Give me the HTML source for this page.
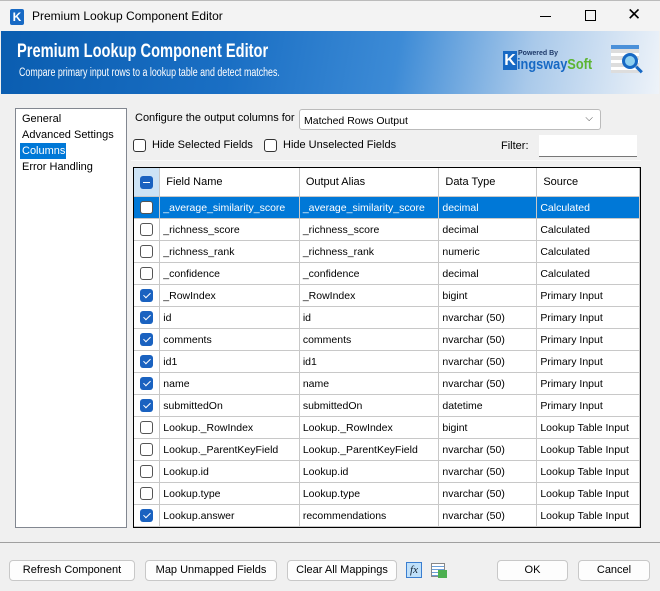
<!DOCTYPE html>
<html><head><meta charset="utf-8">
<style>
*{box-sizing:border-box;margin:0;padding:0}
body{width:660px;height:591px;overflow:hidden;background:#f0f0f0;font-family:"Liberation Sans",sans-serif;font-size:11px;color:#000;position:relative}
.a{position:absolute}
.title{left:0;top:0;width:660px;height:31px;background:#f3f3f3;border-top:1px solid #bbb}
.banner{left:1px;top:31px;width:658px;height:63px;background:linear-gradient(100deg,#0a5db0 0%,#1a6fc4 35%,#3d8bd6 60%,#a9c9ea 80%,#eef3f9 100%)}
.list{left:15px;top:108px;width:112px;height:420px;background:#fff;border:1px solid #828790}
.list div{padding-left:6px;height:16px;line-height:16px;font-size:11px;white-space:nowrap}
.grid{left:133px;top:167px;width:508px;height:361px;border:1px solid #000;background:#fff;overflow:hidden}
table{border-collapse:collapse;table-layout:fixed}
td{height:22px;border-right:1px solid #c8c8c8;border-bottom:1px solid #c8c8c8;padding:1px 0 0 3px;font-size:10.5px;white-space:nowrap;overflow:hidden;vertical-align:middle}
tr.h td{height:28px;padding-left:6px;font-size:11px}
tr.s td{background:#0078d7;color:#fff}
.cb{width:13px;height:13px;border:1px solid #555;border-radius:3px;background:#fff;margin-left:6px}
.ck{width:13px;height:13px;border-radius:3px;background:#1a62c0;margin-left:6px;position:relative}
.ck:after{content:"";position:absolute;left:4.5px;top:2px;width:3px;height:6px;border:solid #fff;border-width:0 1.3px 1.3px 0;transform:rotate(45deg)}
.mn{width:13px;height:13px;border-radius:3px;background:#1a62c0;margin-left:6px;position:relative}
.btn{height:21px;border:1px solid #c8c8c8;border-radius:4px;background:#fdfdfd;text-align:center;line-height:19px;font-size:11px}
.chk{width:13px;height:13px;border:1px solid #333;border-radius:3px;background:#fff}
.sx{transform:scaleX(0.77);transform-origin:left top;white-space:nowrap}
</style></head><body>
<div class="a title">
  <div class="a" style="left:10px;top:8px;width:14px;height:16px;background:#1769c4;border-radius:2px;color:#fff;font-weight:bold;font-size:12px;text-align:center;line-height:16px">K</div>
  <div class="a" style="left:32px;top:8px;font-size:12px">Premium Lookup Component Editor</div>
  <div class="a" style="left:540px;top:15px;width:11px;height:1px;background:#000"></div>
  <div class="a" style="left:585px;top:9px;width:11px;height:11px;border:1px solid #000"></div>
  <div class="a" style="left:627px;top:5px;font-size:17px;line-height:17px">✕</div>
</div>
<div class="a banner">
  <div class="a sx" style="left:16px;top:10px;color:#fff;font-weight:bold;font-size:19px">Premium Lookup Component Editor</div>
  <div class="a sx" style="left:18px;top:36px;color:#fff;font-size:11.5px">Compare primary input rows to a lookup table and detect matches.</div>
  <div class="a" style="left:502px;top:20px;width:14px;height:19px;background:#1769c4;color:#fff;font-weight:bold;font-size:16px;line-height:19px;text-align:center">K</div>
  <div class="a" style="left:517px;top:19px;font-size:7px;font-weight:bold;color:#1e3a6a">Powered By</div>
  <div class="a sx" style="left:516px;top:25px;font-size:15px;font-weight:bold;color:#1769c4;transform:scaleX(0.85)">ingsway<span style="color:#5cb531">Soft</span></div>
  <div class="a" style="left:610px;top:14px;width:28px;height:28px;background:repeating-linear-gradient(#ddd 0 4px,#fff 4px 7px);border-top:4px solid #4a90d9"></div>
  <div class="a" style="left:621px;top:22px;width:16px;height:16px;border:3px solid #1769c4;border-radius:50%;background:#8fd0f0"></div>
  <div class="a" style="left:634px;top:37px;width:8px;height:3px;background:#1769c4;transform:rotate(45deg)"></div>
</div>
<div class="a list">
  <div style="margin-top:2px">General</div>
  <div>Advanced Settings</div>
  <div style="margin-left:4px;padding-left:2px;width:46px;background:#0078d7;color:#fff">Columns</div>
  <div>Error Handling</div>
</div>
<div class="a" style="left:135px;top:112px">Configure the output columns for</div>
<div class="a" style="left:299px;top:109px;width:302px;height:21px;background:#fff;border:1px solid #bbb;border-radius:3px;padding:5px 0 0 4px;font-size:10.5px">Matched Rows Output<span class="a" style="right:7px;top:3px;font-size:10px;color:#444">⌵</span></div>
<div class="a chk" style="left:133px;top:139px"></div>
<div class="a" style="left:152px;top:139px">Hide Selected Fields</div>
<div class="a chk" style="left:264px;top:139px"></div>
<div class="a" style="left:283px;top:139px">Hide Unselected Fields</div>
<div class="a" style="left:501px;top:140px">Filter:</div>
<div class="a" style="left:539px;top:135px;width:98px;height:22px;background:#fff;border-bottom:1px solid #777"></div>
<div class="a" style="left:131px;top:160px;width:510px;height:1px;background:#fafafa"></div>
<div class="a grid">
<table>
<colgroup><col style="width:26px"><col style="width:140px"><col style="width:140px"><col style="width:99px"><col style="width:103px"></colgroup>
<tr class="h"><td style="background:#cde3f5;padding-left:0"><div class="mn"><div class="a" style="left:3px;top:6px;width:7px;height:1.5px;background:#fff"></div></div></td><td>Field Name</td><td>Output Alias</td><td>Data Type</td><td>Source</td></tr>
<tr class="s"><td style="padding-left:0"><div class="cb"></div></td><td>_average_similarity_score</td><td>_average_similarity_score</td><td>decimal</td><td>Calculated</td></tr>
<tr><td style="padding-left:0"><div class="cb"></div></td><td>_richness_score</td><td>_richness_score</td><td>decimal</td><td>Calculated</td></tr>
<tr><td style="padding-left:0"><div class="cb"></div></td><td>_richness_rank</td><td>_richness_rank</td><td>numeric</td><td>Calculated</td></tr>
<tr><td style="padding-left:0"><div class="cb"></div></td><td>_confidence</td><td>_confidence</td><td>decimal</td><td>Calculated</td></tr>
<tr><td style="padding-left:0"><div class="ck"></div></td><td>_RowIndex</td><td>_RowIndex</td><td>bigint</td><td>Primary Input</td></tr>
<tr><td style="padding-left:0"><div class="ck"></div></td><td>id</td><td>id</td><td>nvarchar (50)</td><td>Primary Input</td></tr>
<tr><td style="padding-left:0"><div class="ck"></div></td><td>comments</td><td>comments</td><td>nvarchar (50)</td><td>Primary Input</td></tr>
<tr><td style="padding-left:0"><div class="ck"></div></td><td>id1</td><td>id1</td><td>nvarchar (50)</td><td>Primary Input</td></tr>
<tr><td style="padding-left:0"><div class="ck"></div></td><td>name</td><td>name</td><td>nvarchar (50)</td><td>Primary Input</td></tr>
<tr><td style="padding-left:0"><div class="ck"></div></td><td>submittedOn</td><td>submittedOn</td><td>datetime</td><td>Primary Input</td></tr>
<tr><td style="padding-left:0"><div class="cb"></div></td><td>Lookup._RowIndex</td><td>Lookup._RowIndex</td><td>bigint</td><td>Lookup Table Input</td></tr>
<tr><td style="padding-left:0"><div class="cb"></div></td><td>Lookup._ParentKeyField</td><td>Lookup._ParentKeyField</td><td>nvarchar (50)</td><td>Lookup Table Input</td></tr>
<tr><td style="padding-left:0"><div class="cb"></div></td><td>Lookup.id</td><td>Lookup.id</td><td>nvarchar (50)</td><td>Lookup Table Input</td></tr>
<tr><td style="padding-left:0"><div class="cb"></div></td><td>Lookup.type</td><td>Lookup.type</td><td>nvarchar (50)</td><td>Lookup Table Input</td></tr>
<tr><td style="padding-left:0"><div class="ck"></div></td><td>Lookup.answer</td><td>recommendations</td><td>nvarchar (50)</td><td>Lookup Table Input</td></tr>
</table>
</div>
<div class="a" style="left:0;top:542px;width:660px;height:1px;background:#a0a0a0"></div>
<div class="a btn" style="left:9px;top:560px;width:126px">Refresh Component</div>
<div class="a btn" style="left:145px;top:560px;width:132px">Map Unmapped Fields</div>
<div class="a btn" style="left:287px;top:560px;width:110px">Clear All Mappings</div>
<div class="a" style="left:406px;top:562px;width:16px;height:16px;background:#bfe0fa;border:1px solid #3a7ed0;font-style:italic;font-family:'Liberation Serif',serif;font-size:11px;line-height:14px;text-align:center;color:#123">fx</div>
<div class="a" style="left:431px;top:563px;width:14px;height:14px;background:repeating-linear-gradient(#fff 0 2px,#6a9fd8 2px 3px);border:1px solid #888"></div>
<div class="a" style="left:438px;top:570px;width:9px;height:8px;background:#4caf50"></div>
<div class="a btn" style="left:497px;top:560px;width:71px">OK</div>
<div class="a btn" style="left:578px;top:560px;width:72px">Cancel</div>
</body></html>
